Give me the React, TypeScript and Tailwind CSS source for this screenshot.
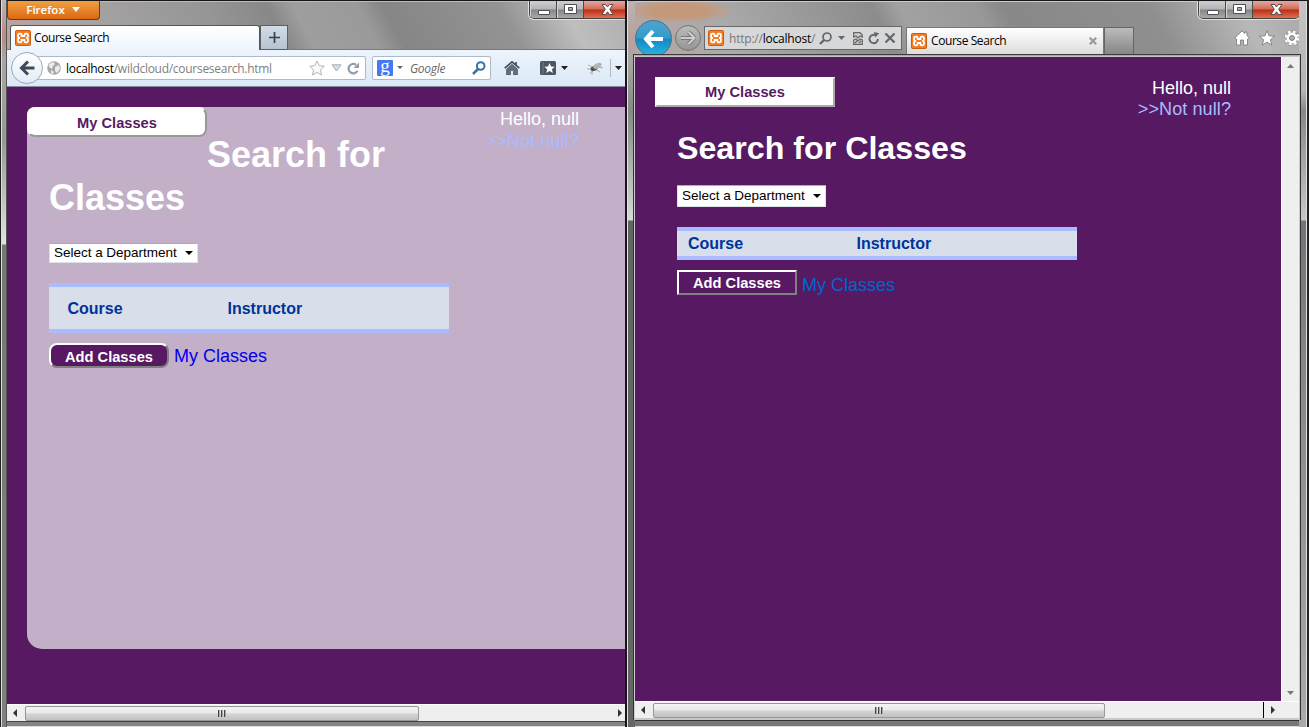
import type { ReactNode } from 'react';

const ARIAL = "font-['Liberation_Sans',Arial,sans-serif]";
const UI = "font-['Open_Sans','Noto_Sans',sans-serif]";

function Favicon() {
  return (
    <svg width="16" height="16" viewBox="0 0 16 16" className="shrink-0">
      <rect x=".5" y=".5" width="15" height="15" rx="1" fill="#f47b20" stroke="#c95e12" />
      <path d="M5 7.8H4.2Q3 7.8 3 6.3V5.2Q3 3.7 4.5 3.7H5.4Q6.6 3.7 6.6 5V6H9.4V5Q9.4 3.7 10.6 3.7H11.5Q13 3.7 13 5.2V6.3Q13 7.8 11.8 7.8H11M5 8.2H4.2Q3 8.2 3 9.7V10.8Q3 12.3 4.5 12.3H5.4Q6.6 12.3 6.6 11V10H9.4V11Q9.4 12.3 10.6 12.3H11.5Q13 12.3 13 10.8V9.7Q13 8.2 11.8 8.2H11" fill="none" stroke="#fff" strokeWidth="1.8" />
    </svg>
  );
}

function Caret({ color = '#222', w = 7, h = 4 }: { color?: string; w?: number; h?: number }) {
  return (
    <svg width={w} height={h} viewBox="0 0 8 4" preserveAspectRatio="none" className="shrink-0">
      <path d="M0 0H8L4 4Z" fill={color} />
    </svg>
  );
}

const GLASS = 'flex w-[27px] shrink-0 items-center justify-center border-r border-[#4a4a4a] bg-[linear-gradient(#cfcfcf,#b4b4b4_48%,#858585_52%,#a9a9a9)] shadow-[inset_1px_0_0_#d5d5d5]';

function CaptionButtons({ cut = false }: { cut?: boolean }) {
  return (
    <div className={`h-[19px] shrink-0 overflow-hidden border border-t-0 border-[#e0e0e0] ${cut ? 'w-[97px] rounded-bl-[6px] border-r-0' : '-mr-[2px] w-[104px] rounded-b-[6px]'}`}>
      <div className={`flex h-[18px] overflow-hidden border border-t-0 border-[#444] ${cut ? 'rounded-bl-[5px] border-r-0' : 'rounded-b-[5px]'}`}>
        <div className={GLASS}>
          <svg width="13" height="15" viewBox="0 0 13 15"><rect x="1.500" y="8.500" width="11" height="4" rx=".5" fill="#fff" stroke="#4d4d5c" /></svg>
        </div>
        <div className={GLASS}>
          <svg width="13" height="13" viewBox="0 0 13 13"><path d="M.5 1.500H12.500V10.500H.5ZM4.500 4.500V7.500H8.500V4.500Z" fill="#fff" fillRule="evenodd" stroke="#4d4d5c" /></svg>
        </div>
        <div className={`flex w-[47px] shrink-0 items-center bg-[linear-gradient(#e3aa9d,#d2695a_48%,#b92d17_52%,#e0714f)] ${cut ? 'pl-[17px]' : 'pl-[17px]'}`}>
          <svg width="13" height="11" viewBox="0 0 13 11"><path d="M1 .5H4.500L6.500 3L8.500 .5H12L8.700 5.200L12 10.500H8.500L6.500 7.800L4.500 10.500H1L4.300 5.200Z" fill="#fff" stroke="#5a4a52" /></svg>
        </div>
      </div>
    </div>
  );
}

function ScrollArrow({ left = false }: { left?: boolean }) {
  return (
    <svg width="4" height="8" viewBox="0 0 4 8" className="shrink-0">
      <path d={left ? 'M4 0V8L0 4Z' : 'M0 0V8L4 4Z'} fill="#333" />
    </svg>
  );
}

function Thumb({ children }: { children?: ReactNode }) {
  return (
    <div className="flex h-[15px] w-full items-center justify-center gap-px rounded-[2px] border border-[#979797] bg-[linear-gradient(#f5f5f5,#e8e8e9_48%,#d4d4d6_52%,#c2c2c5)]">
      {children}
      {[0, 1, 2].map((i) => (
        <div key={i} className="h-[7px] w-[2px] border-l border-[#444] bg-[#aaa]" />
      ))}
    </div>
  );
}

function Department({ short = false }: { short?: boolean }) {
  return (
    <div className={`flex w-[149px] items-center justify-between rounded-[1px] border border-[#dde3ea] border-t-[#abadb3] bg-white pr-1 pl-1 text-[13.5px] text-black ${short ? 'h-[20px]' : 'h-[22px]'}`}>
      <span className="pt-px tracking-[-0.02px] whitespace-nowrap">Select a Department</span>
      <Caret color="#000" w={8} />
    </div>
  );
}

function Firefox() {
  return (
    <div className="flex h-full w-[625px] shrink-0 overflow-hidden">
      <div className="w-[7px] shrink-0 border-r border-l border-l-[#222] border-r-[#555] bg-[linear-gradient(#b9b5b5,#b98c84_36px,#a9a5a5_60px,#989898_140px,#e2e2e2_244px,#777_245px,#808080)] shadow-[inset_1px_0_0_#ddd]" />
      <div className="flex w-[618px] shrink-0 flex-col">
        <div className="h-[50px] border-t border-[#17141a] bg-[linear-gradient(62deg,#bba39f_0%,#a9a5a5_12%,#969696_34%,#888_44%,#9e9e9e_48%,#9a9a9a_58%,#868686_62%,#939393_80%,#bebebe_90%,#aeaeae)] shadow-[inset_0_1px_0_#bbb,inset_0_-1px_0_#77797d]">
          <div className="flex h-6 justify-between">
            <div className={`flex h-[19px] w-[93px] justify-center gap-[7px] rounded-b-[4px] border border-t-0 border-[#703a12] bg-linear-to-b from-[#f0a040] to-[#dc6810] pr-px text-[11.5px] leading-[18px] font-semibold text-white ${UI}`}>
              <span>Firefox</span>
              <span className="pt-[6px]"><Caret color="#fff" w={8} h={5} /></span>
            </div>
            <CaptionButtons cut />
          </div>
          <div className="flex h-[25px] pl-[3px]">
            <div className={`flex w-[250px] items-center gap-[3px] rounded-t-[3px] border border-b-0 border-[#56565a] bg-linear-to-b from-white to-[#edf4fc] pl-1 text-[12px] tracking-[-0.42px] text-black ${UI}`}>
              <Favicon /><span className="tracking-[-0.42px]">Course Search</span>
            </div>
            <div className="flex h-[25px] w-[28px] items-center justify-center border border-[#5b6067] bg-linear-to-b from-[#d3dce6] to-[#b6c4d1]">
              <svg width="11" height="11" viewBox="0 0 11 11"><path d="M5.500 0V11M0 5.500H11" stroke="#334150" strokeWidth="1.700" /></svg>
            </div>
          </div>
        </div>
        <div className="flex h-[37px] items-center border-b border-[#8a8aa3] bg-linear-to-b from-[#edf4fc] to-[#dbe8f6]">
          <div className="z-10 ml-1 flex size-8 shrink-0 items-center justify-center rounded-full border border-[#9aa8b8] bg-linear-to-b from-white to-[#e4ecf5]">
            <svg width="16" height="16" viewBox="0 0 16 16"><path d="M9 1.500L2.500 8L9 14.500M3 8H15.500" fill="none" stroke="#3d4a59" strokeWidth="3" /></svg>
          </div>
          <div className={`-ml-[6px] flex h-6 w-[329px] shrink-0 items-center rounded-r-[2px] border border-[#aeb9c8] bg-white pl-[9px] text-[12px] text-[#808080] ${UI}`}>
            <svg width="14" height="14" viewBox="0 0 14 14"><circle cx="7" cy="7" r="6.800" fill="#a6a6a6" /><path d="M2 3L6 1L8 3L6 5L5 8L2 6ZM8 6L12 4L13 8L10 12L8 10ZM4 9L7 11L6 13L4 12Z" fill="#ececec" /></svg>
            <span className="ml-[5px] w-[243px] pt-[2px] tracking-[-0.28px] whitespace-nowrap"><span className="text-black">localhost</span>/wildcloud/coursesearch.html</span>
            <svg width="16" height="16" viewBox="0 0 16 16" className="shrink-0"><path d="M8 1L10.200 5.700L15.300 6.300L11.500 9.800L12.500 15L8 12.400L3.500 15L4.500 9.800L.7 6.300L5.800 5.700Z" fill="#fafafa" stroke="#b4b4b4" /></svg>
            <svg width="11" height="8" viewBox="0 0 11 8" className="ml-[6px] shrink-0"><path d="M1 .8H10L5.500 7Z" fill="#d9dfe6" stroke="#a4afbc" /></svg>
            <svg width="13" height="13" viewBox="0 0 13 13" className="ml-[5px] shrink-0"><path d="M10.500 8.700A4.700 4.700 0 1 1 9 2.800" fill="none" stroke="#929dab" strokeWidth="2.200" /><path d="M6.500 6H12V.5Z" fill="#929dab" /></svg>
          </div>
          <div className={`ml-[6px] flex h-6 w-[119px] shrink-0 items-center rounded-[2px] border border-[#aeb9c8] bg-white pl-1 text-[12px] text-[#666] italic ${UI}`}>
            <span className="h-4 w-4 shrink-0 rounded-[1px] bg-[#4479f6] text-center font-['Liberation_Serif',serif] text-[19px] leading-[11px] text-white not-italic">g</span>
            <span className="mr-[7px] ml-1 -mt-px"><Caret color="#666" w={6} h={3} /></span>
            <span className="w-[62px] pt-[2px] tracking-[-0.3px]">Google</span>
            <svg width="14" height="14" viewBox="0 0 14 14" className="shrink-0"><circle cx="8.700" cy="5" r="3.800" fill="none" stroke="#3275ad" strokeWidth="2" /><path d="M6 8L1 13" stroke="#3275ad" strokeWidth="2.500" /></svg>
          </div>
          <svg width="16" height="14" viewBox="0 0 16 14" className="ml-[13px] shrink-0"><path d="M.7 7.200L8 .8L15.300 7.200M12 1V4" fill="none" stroke="#46505b" strokeWidth="1.700" /><path d="M2.500 8L8 3.200L13.500 8V14H9.500V9.500H6.500V14H2.500Z" fill="#626e7a" stroke="#46505b" strokeWidth=".6" /></svg>
          <svg width="16" height="14" viewBox="0 0 16 14" className="ml-5 shrink-0"><rect width="16" height="14" rx="1.500" fill="#4c5763" /><path d="M3 1V13" stroke="#74808c" /><path d="M9.500 2L11 5.500L14.800 5.800L11.900 8.200L12.900 12L9.500 10L6.200 12L7.200 8.200L4.300 5.800L8 5.500Z" fill="#fff" /></svg>
          <span className="ml-[5px] flex"><Caret w={7} /></span>
          <svg width="16" height="13" viewBox="0 0 16 13" className="ml-[19px] shrink-0"><path d="M1 3L7 6M0 7L7 7M3 11L8 7M8 7L13 10M10 5L16 6M5 9V13" stroke="#999" strokeWidth=".8" /><ellipse cx="7" cy="6.500" rx="3.600" ry="2.400" fill="#55504c" transform="rotate(-20 7 6.500)" /><ellipse cx="10.500" cy="4" rx="4.500" ry="2.500" fill="#b4b4b4" transform="rotate(-25 10 4)" /></svg>
          <div className="ml-[7px] h-[18px] w-px shrink-0 bg-[#aeb8c4]" />
          <span className="ml-1 flex shrink-0"><Caret w={7} /></span>
        </div>
        <div className={`h-[617px] bg-[#571962] pt-[20px] pl-5 ${ARIAL}`}>
          <div className="flex h-[542px] flex-col rounded-tl-[8px] rounded-bl-[15px] bg-[#c3afc8]">
            <div className="flex h-[30px] items-start justify-between pr-[46px]">
              <div className="h-[30px] w-[180px] rounded-[8px] border-2 border-white border-r-[#999] border-b-[#999] bg-white text-center text-[14.67px] leading-[28px] font-bold text-[#571962]">My Classes</div>
              <div className="h-0 text-right text-[18px] leading-[22px] text-white">
                <div className="pt-[1px]">Hello, null</div>
                <div className="tracking-[0.1px] text-[#aabbff]">&gt;&gt;Not null?</div>
              </div>
            </div>
            <h1 className="-mt-[4px] h-[86px] w-[380px] pl-[22px] indent-[158px] text-[36px] leading-[43px] font-bold text-white">Search for Classes</h1>
            <div className="mt-[24px] ml-[22px]"><Department short /></div>
            <div className="mt-[20px] ml-[22px] flex h-[50px] w-[400px] items-center border-y-4 border-[#aabbff] bg-[#d9dfea] pt-[2px] pl-[18.500px] text-[16px] font-bold text-[#003399]">
              <span className="w-[160px]">Course</span><span>Instructor</span>
            </div>
            <div className="mt-[10px] ml-[22px] flex items-start">
              <div className="h-[25px] w-[120px] rounded-[8px] border-2 border-white border-r-[#808080] border-b-[#808080] bg-[#571962] pt-px text-center text-[14.67px] leading-[23px] font-bold text-white">Add Classes</div>
              <span className="ml-[5px] pt-px text-[18px] leading-[25px] text-[#0000ee]">My Classes</span>
            </div>
          </div>
        </div>
        <div className="flex h-[17px] items-center border-t border-white bg-[#efefef] pl-[6px]">
          <ScrollArrow left />
          <div className="ml-[8px] w-[394px]"><Thumb /></div>
          <div className="ml-[199px]"><ScrollArrow /></div>
        </div>
        <div className="h-[6px] border-t border-b border-t-[#444] border-b-[#ddd] bg-[#858585]" />
      </div>
    </div>
  );
}

function Explorer() {
  return (
    <div className="flex h-full w-[684px] shrink-0 border-l-2 border-[#17151a] bg-[#999]">
      <div className="w-[8px] shrink-0 border-t border-l border-t-[#17141a] border-l-[#e2e2e2] bg-[linear-gradient(#b9b5b5,#b9a19c_36px,#a9a5a5_60px,#888_110px,#d8d8d8_219px,#646466_220px,#666)]">
        <div className="mt-[53px] ml-[5px] h-[666px] w-[2px] border-t border-l border-[#333] bg-[#ccc]" />
      </div>
      <div className="flex w-[664px] shrink-0 flex-col">
        <div className="h-[57px] border-t border-[#17141a] bg-[radial-gradient(ellipse_55px_12px_at_45px_10px,#c4997b_55%,transparent),linear-gradient(62deg,#b7a5a2_0%,#aaa_15%,#8c8c8c_38%,#a2a2a2_42%,#989898_53%,#888_57%,#8f8f8f_78%,#b8b8b8_91%,#a9a9a9)] shadow-[inset_0_1px_0_#ccc,inset_0_-1px_0_#c6c6c6,inset_0_-2px_0_#aaa,inset_0_-3px_0_#3c3c3c]">
          <div className="flex h-[53px]">
            <div className="flex h-[53px] w-[41px] shrink-0 items-end overflow-hidden">
              <div className="-mb-[3px] flex h-[37px] w-[37px] shrink-0 items-center justify-center rounded-full border border-[#516d7d] bg-[linear-gradient(#4ba5d0,#369aca_48%,#118ac2_52%,#29b4e6)]">
                <svg width="21" height="20" viewBox="0 0 21 20"><path d="M10 2L3 10L10 18M3 10H20" fill="none" stroke="#fff" strokeWidth="4" /></svg>
              </div>
            </div>
            <div className="mt-6 -ml-[1px] flex size-[26px] shrink-0 items-center justify-center rounded-full border border-[#727272] bg-linear-to-b from-[#bbb] to-[#969696]">
              <svg width="16" height="16" viewBox="0 0 16 16"><path d="M8.500 2L14.500 8L8.500 14M1 8H14" fill="none" stroke="#777" strokeWidth="4" /><path d="M8.500 2L14.500 8L8.500 14M1 8H14" fill="none" stroke="#ccc" strokeWidth="2.200" /></svg>
            </div>
            <div className={`mt-[25px] ml-[3px] flex h-6 w-[198px] shrink-0 items-center border border-[#686868] bg-[#d7d8d9] pl-[3px] text-[12px] text-[#777] ${UI}`}>
              <Favicon />
              <span className="ml-[5px] w-[87px] pt-px tracking-[-0.22px] whitespace-nowrap">http://<span className="text-black">localhost</span>/</span>
              <svg width="13" height="13" viewBox="0 0 13 13" className="ml-[3px] shrink-0"><circle cx="8" cy="5" r="4" fill="none" stroke="#666" strokeWidth="1.700" /><path d="M5 8L1 12" stroke="#666" strokeWidth="2.300" /></svg>
              <span className="ml-[6px] flex"><Caret color="#666" w={7} /></span>
              <svg width="10" height="13" viewBox="0 0 10 13" className="ml-[8px] shrink-0"><path d="M.7 5V.7H7L9.300 3V5L7 4L5 6L3 4ZM.7 8L3 7L5 9L7 7L9.300 8V12.300H.7ZM2 11L4 9M6 11L8 9" fill="#d0d0d0" stroke="#666" strokeWidth="1.200" /></svg>
              <svg width="12" height="13" viewBox="0 0 12 13" className="ml-[5px] shrink-0"><path d="M9.900 7A4.200 4.200 0 1 1 7.500 3.200" fill="none" stroke="#666" strokeWidth="1.900" /><path d="M6 0L11.300 1.200L7.200 5.500Z" fill="#666" /></svg>
              <svg width="12" height="12" viewBox="0 0 12 12" className="ml-[4px] shrink-0"><path d="M1.500 1.500L10.500 10.500M10.500 1.500L1.500 10.500" stroke="#666" strokeWidth="2.200" /></svg>
            </div>
            <div className={`mt-[26px] ml-[4px] flex h-[27px] w-[198px] shrink-0 items-center gap-1 border border-b-0 border-[#777] bg-linear-to-b from-white to-[#dcdddd] pl-1 text-[12px] text-black ${UI}`}>
              <Favicon /><span className="w-[154px] tracking-[-0.42px]">Course Search</span>
              <svg width="8" height="8" viewBox="0 0 8 8" className="shrink-0"><path d="M.8 .8L7.200 7.200M7.200 .8L.8 7.200" stroke="#999" strokeWidth="2.200" /></svg>
            </div>
            <div className="mt-[26px] h-[27px] w-[30px] shrink-0 border border-b-0 border-[#666] bg-linear-to-b from-[#bcbcbc] to-[#868686]" />
            <div className="flex flex-1 flex-col items-end">
              <CaptionButtons />
              <div className="-mr-[1px] mt-[10px] flex items-center gap-[9px]">
                <svg width="16" height="16" viewBox="0 0 16 16"><path d="M8 1L0.900 7.800L2.500 9V15H6.500V10H9.500V15H13.500V9L15.100 7.800L13 5.500V2H11V3.500Z" fill="#fff" stroke="#777" strokeWidth=".8" /></svg>
                <svg width="16" height="16" viewBox="0 0 16 16"><path d="M8 .7L10.100 5.900L15.600 6.200L11.300 9.700L12.800 15L8 12L3.200 15L4.700 9.700L.4 6.200L5.900 5.900Z" fill="#fff" stroke="#777" strokeWidth=".8" /></svg>
                <svg width="16" height="16" viewBox="0 0 16 16"><circle cx="8" cy="8" r="6.700" fill="none" stroke="#777" strokeWidth="2.600" strokeDasharray="3 2.260" /><circle cx="8" cy="8" r="6.300" fill="none" stroke="#fff" strokeWidth="2.600" strokeDasharray="2.600 2.350" /><circle cx="8" cy="8" r="3.900" fill="none" stroke="#fff" strokeWidth="2.800" /><circle cx="8" cy="8" r="2.400" fill="none" stroke="#777" /></svg>
              </div>
            </div>
          </div>
        </div>
        <div className="flex h-[644px]">
          <div className={`w-[646px] shrink-0 bg-[#571962] pt-[20px] pl-5 ${ARIAL}`}>
            <div className="flex h-[53px] items-start justify-between pr-[50px]">
              <div className="h-[30px] w-[180px] border-2 border-white border-r-[#aaa] border-b-[#aaa] bg-white text-center text-[14.67px] leading-[27px] font-bold text-[#571962]">My Classes</div>
              <div className="pt-px text-right text-[18px] leading-[21px] text-white">
                <div>Hello, null</div><div className="tracking-[0.1px] text-[#aabbff]">&gt;&gt;Not null?</div>
              </div>
            </div>
            <div className="pl-[22px]">
              <h1 className="h-[35px] text-[32.2px] leading-[37px] font-bold text-white">Search for Classes</h1>
              <div className="mt-[20px]"><Department /></div>
              <div className="mt-[20px] flex h-[33px] w-[400px] items-center border-y-4 border-[#aabbff] bg-[#d9dfea] pl-[11px] text-[16px] font-bold text-[#003399]">
                <span className="w-[168.500px]">Course</span><span>Instructor</span>
              </div>
              <div className="mt-[10px] flex items-start">
                <div className="h-[25px] w-[120px] border-2 border-white border-r-[#808080] border-b-[#808080] bg-[#571962] text-center text-[14.67px] leading-[22px] font-bold text-white">Add Classes</div>
                <span className="ml-[5px] pt-[3px] text-[18px] leading-[25px] text-[#0066cc]">My Classes</span>
              </div>
            </div>
          </div>
          <div className="flex w-[18px] flex-col items-center justify-between border-l border-white bg-[#efefef] pt-[7px] pb-[6px]">
            <svg width="7" height="4" viewBox="0 0 7 4"><path d="M0 4H7L3.500 0Z" fill="#777" /></svg>
            <Caret color="#777" />
          </div>
        </div>
        <div className="flex h-[17px] items-center border-t border-white bg-[#efefef] pl-[6px]">
          <ScrollArrow left />
          <div className="ml-[8px] w-[452px]"><Thumb /></div>
          <div className="ml-[158px] h-full w-px bg-black" />
          <div className="ml-[7px]"><ScrollArrow /></div>
        </div>
        <div className="flex h-[9px] flex-col border-t-2 border-b border-t-[#c8c8c8] border-b-[#ddd] bg-[#777]">
          <div className="h-px bg-[#333]" />
        </div>
      </div>
      <div className="w-[10px] shrink-0 border-t border-r-2 border-t-[#17141a] border-r-[#252525] bg-[linear-gradient(#c4c4c4,#b5b5b5_90px,#888_110px,#c8c8c8_219px,#77727a_220px,#8a8a8a_400px,#aaa)] shadow-[inset_-1px_0_0_#ddd]">
        <div className="mt-[53px] h-[666px] w-[2px] border-t border-r border-[#333] bg-[#ccc]" />
      </div>
    </div>
  );
}

export default function App() {
  return (
    <main className="flex h-[727px] w-[1309px] overflow-hidden bg-[#571962]">
      <Firefox />
      <Explorer />
    </main>
  );
}
